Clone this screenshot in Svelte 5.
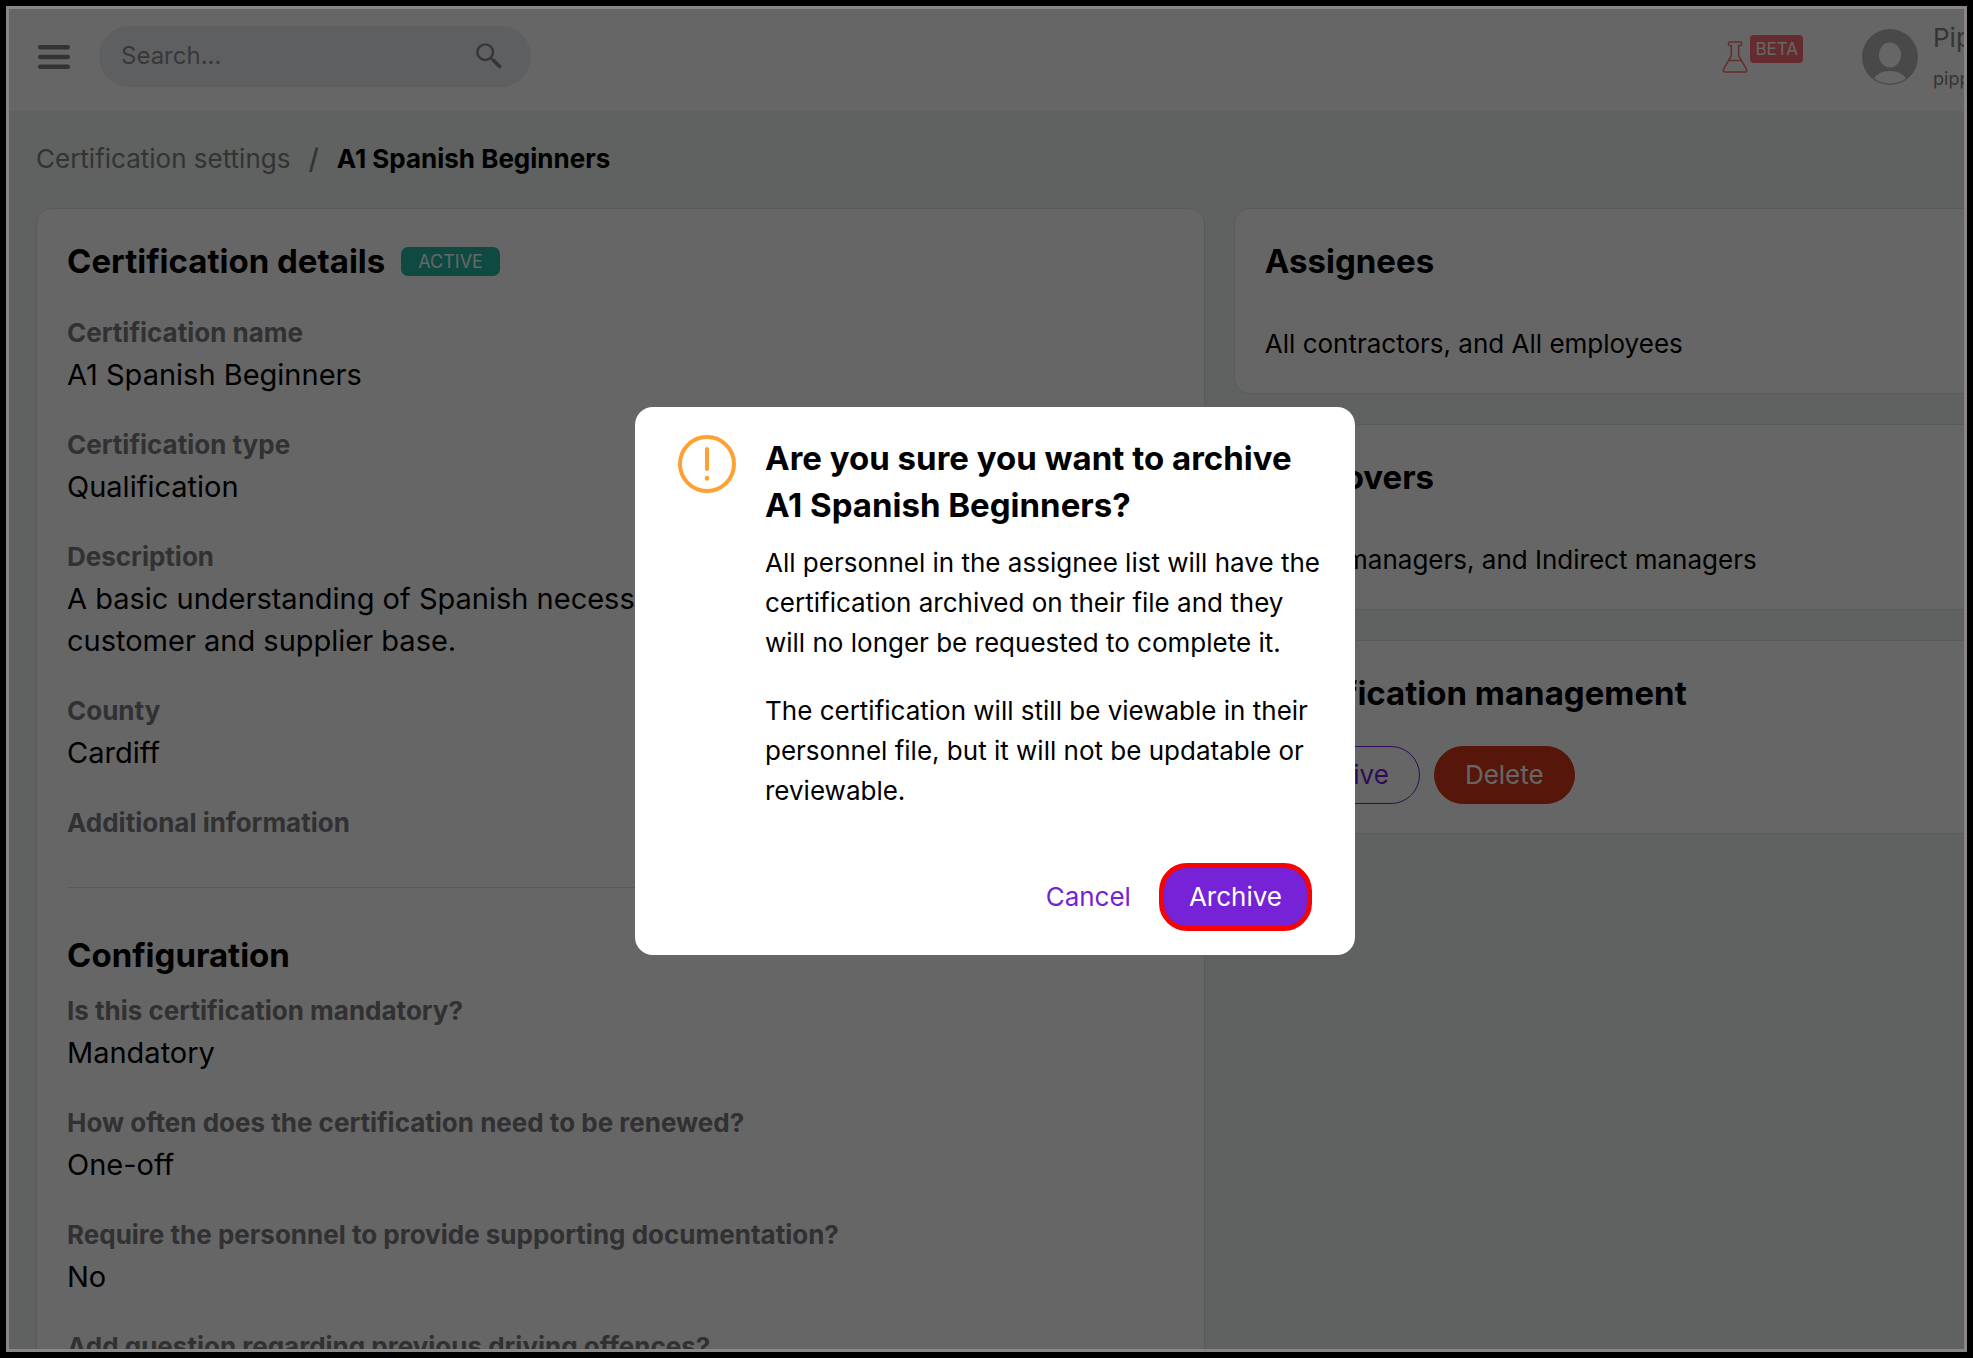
<script lang="ts">
  interface Field {
    label: string;
    value?: string;
  }

  const details: Field[] = [
    { label: "Certification name", value: "A1 Spanish Beginners" },
    { label: "Certification type", value: "Qualification" },
    {
      label: "Description",
      value: "A basic understanding of Spanish necessary for our\ncustomer and supplier base.",
    },
    { label: "County", value: "Cardiff" },
    { label: "Additional information" },
  ];

  const configuration: Field[] = [
    { label: "Is this certification mandatory?", value: "Mandatory" },
    { label: "How often does the certification need to be renewed?", value: "One-off" },
    { label: "Require the personnel to provide supporting documentation?", value: "No" },
    { label: "Add question regarding previous driving offences?", value: "No" },
  ];

  let search = $state("");
  let dialogOpen = $state(true);

  function closeDialog() {
    dialogOpen = false;
  }
</script>

{#snippet fieldList(fields: Field[])}
  <dl class="fields">
    {#each fields as field}
      <div class="field">
        <dt>{field.label}</dt>
        {#if field.value}
          <dd>{field.value}</dd>
        {/if}
      </div>
    {/each}
  </dl>
{/snippet}

<div class="frame">
  <header class="topbar">
    <button class="menu" aria-label="Menu">
      <svg width="32" height="24" viewBox="0 0 32 24" fill="none" stroke="currentColor" stroke-width="4.4" stroke-linecap="round">
        <path d="M2.2 2.2h27.6M2.2 12h27.6M2.2 21.8h27.6" />
      </svg>
    </button>
    <label class="search">
      <input type="text" placeholder="Search..." aria-label="Search" bind:value={search} />
      <svg width="26" height="26" viewBox="0 0 26 26" fill="none" stroke="currentColor" stroke-linecap="round">
        <circle cx="9.2" cy="9.2" r="7.8" stroke-width="2.4" />
        <path d="M15 15.2l1.6 1.6" stroke-width="2.4" />
        <path d="M17.6 17.6l6 6" stroke-width="3.6" />
      </svg>
    </label>
    <div class="beta">
      <svg width="26" height="32" viewBox="0 0 26 32" fill="none" stroke="currentColor" stroke-width="1.5" stroke-linejoin="round">
        <path d="M7.5 1h11q1 0 1 1v1.6q0 1-1 1h-1.8v10l7.7 13.6c.9 1.6.2 2.8-1.4 2.8H3c-1.6 0-2.3-1.2-1.4-2.8L9.3 14.6v-10H7.500q-1 0-1-1V2q0-1 1-1zM7 19.500h12" />
      </svg>
      <span>BETA</span>
    </div>
    <div class="user">
      <svg width="56" height="56" viewBox="0 0 56 56">
        <circle cx="28" cy="28" r="28" fill="#b6b7ba" />
        <ellipse cx="28" cy="26" rx="11" ry="12.5" fill="#fff" />
        <path d="M12 49.3Q17 42 28 42t16 7.3A26.6 26.6 0 0 1 12 49.3z" fill="#fff" />
      </svg>
      <div class="who">
        <span class="name">Pippa</span>
        <span class="mail">pippa</span>
      </div>
    </div>
  </header>

  <nav class="crumbs" aria-label="Breadcrumb">
    <a href="#settings">Certification settings</a>
    <span class="slash">/</span>
    <strong>A1 Spanish Beginners</strong>
  </nav>

  <main class="columns">
    <section class="card">
      <div class="heading">
        <h2>Certification details</h2>
        <span class="badge">ACTIVE</span>
      </div>
      {@render fieldList(details)}
      <hr />
      <h2 class="config-title">Configuration</h2>
      {@render fieldList(configuration)}
    </section>

    <div class="side">
      <section class="card">
        <h2>Assignees</h2>
        <p>All contractors, and All employees</p>
      </section>
      <section class="card">
        <h2>Approvers</h2>
        <p>Direct managers, and Indirect managers</p>
      </section>
      <section class="card">
        <h2>Certification management</h2>
        <div class="actions">
          <button class="btn outline" onclick={() => (dialogOpen = true)}>Archive</button>
          <button class="btn danger">Delete</button>
        </div>
      </section>
    </div>
  </main>

  {#if dialogOpen}
    <div class="overlay">
      <div class="dialog" role="alertdialog" aria-modal="true" aria-labelledby="dialog-title">
        <svg class="alert" width="58" height="58" viewBox="0 0 58 58" fill="none" stroke="#ffa033" stroke-linecap="round">
          <circle cx="29" cy="29" r="27" stroke-width="4" />
          <path d="M29 14v20" stroke-width="4" />
          <path d="M29 43v.6" stroke-width="4.4" />
        </svg>
        <div class="dialog-body">
          <h2 id="dialog-title">Are you sure you want to archive<br />A1 Spanish Beginners?</h2>
          <p>
            All personnel in the assignee list will have the<br />certification archived on their file and they<br />will
            no longer be requested to complete it.
          </p>
          <p>
            The certification will still be viewable in their<br />personnel file, but it will not be updatable or<br
            />reviewable.
          </p>
        </div>
        <div class="dialog-actions">
          <button class="cancel" onclick={closeDialog}>Cancel</button>
          <button class="confirm" onclick={closeDialog}>Archive</button>
        </div>
      </div>
    </div>
  {/if}
</div>

<style>
  :global(body) {
    background: #000;
  }

  .frame {
    position: relative;
    box-sizing: border-box;
    height: calc(100vh - 12px);
    margin: 6px;
    border: 3px solid #8a8686;
    overflow: hidden;
    background: #edf4f1;
    color: #000;
    font-family: Inter, "Liberation Sans", sans-serif;
    font-size: 26px;
    line-height: 40px;
  }

  h2,
  p,
  dl,
  dd {
    margin: 0;
  }

  h2 {
    font-size: 33px;
    line-height: 46px;
    font-weight: 700;
  }

  button {
    padding: 0;
    border: 0;
    background: none;
    font: inherit;
    cursor: pointer;
  }

  svg {
    display: block;
    flex: none;
  }

  .topbar {
    display: flex;
    align-items: center;
    box-sizing: border-box;
    height: 102px;
    padding: 0 0 7px 29px;
    background: #fff;
  }

  .menu {
    margin-right: 29px;
    color: #7d7f85;
  }

  .search {
    display: flex;
    align-items: center;
    box-sizing: border-box;
    width: 432px;
    height: 61px;
    padding: 0 29px 2px 22px;
    border-radius: 31px;
    background: #ecedf1;
    color: #858585;
    font-size: 24px;
  }

  .search input {
    flex: 1;
    min-width: 0;
    padding: 0;
    border: 0;
    outline: 0;
    background: none;
    font: inherit;
    color: inherit;
  }

  .search input::placeholder {
    color: #8d8d8d;
    opacity: 1;
  }

  .beta {
    display: flex;
    gap: 2px;
    align-items: flex-start;
    height: 44px;
    margin-left: auto;
    color: #ff6d74;
  }

  .beta svg {
    margin-top: 6px;
  }

  .beta span {
    padding: 0 5px;
    border-radius: 4px;
    background: #ff6d74;
    color: #fff;
    font-size: 17px;
    line-height: 28px;
  }

  .user {
    display: flex;
    gap: 15px;
    align-items: center;
    width: 102px;
    margin-left: 59px;
    color: #858585;
  }

  .who {
    display: flex;
    flex-direction: column;
    padding-top: 2px;
  }

  .name {
    line-height: 42px;
  }

  .mail {
    font-size: 18px;
  }

  .crumbs {
    display: flex;
    gap: 18px;
    padding: 28px 27px 29px;
  }

  .crumbs a {
    color: #7d7f80;
    text-decoration: none;
  }

  .slash {
    color: #7d7f80;
    font-size: 28px;
    font-weight: 500;
  }

  /* runs past the right edge of the window */
  .columns {
    display: grid;
    grid-template-columns: minmax(0, 3fr) minmax(0, 2fr);
    align-items: start;
    gap: 29px;
    margin: 0 -49px 0 27px;
  }

  .card {
    box-sizing: border-box;
    padding: 29px 30px;
    border: 1px solid #dfe1e1;
    border-radius: 16px;
    background: #fff;
  }

  .side {
    display: flex;
    flex-direction: column;
    gap: 30px;
  }

  .side p {
    margin-top: 40px;
  }

  .heading {
    display: flex;
    align-items: center;
    gap: 16px;
    margin-bottom: 28px;
  }

  .badge {
    padding: 0 17px;
    border-radius: 7px;
    background: #25b9a5;
    color: #fff;
    font-size: 18px;
    line-height: 29px;
  }

  .fields {
    display: flex;
    flex-direction: column;
    gap: 28px;
  }

  dt {
    color: #7b7c80;
    font-weight: 700;
    line-height: 42px;
  }

  dd {
    font-size: 29px;
    line-height: 42px;
    white-space: pre-line;
  }

  hr {
    height: 1px;
    margin: 43px 0 44px;
    border: 0;
    background: #dfe1e1;
  }

  .config-title {
    margin-bottom: 12px;
  }

  .actions {
    display: flex;
    gap: 14px;
    margin-top: 30px;
  }

  .btn {
    box-sizing: border-box;
    height: 58px;
    padding: 0 30px;
    border: 1px solid;
    border-radius: 29px;
  }

  .outline {
    border-color: #7622d7;
    color: #7622d7;
  }

  .danger {
    border-color: #d73919;
    background: #d73919;
    color: #fff;
  }

  .overlay {
    position: absolute;
    inset: 0;
    display: flex;
    align-items: center;
    justify-content: center;
    padding: 4px 0 0 17px;
    background: rgba(0, 0, 0, 0.6);
  }

  .dialog {
    display: grid;
    grid-template-columns: 58px minmax(0, 1fr);
    column-gap: 29px;
    box-sizing: border-box;
    width: 720px;
    padding: 28px 43px 24px;
    border-radius: 18px;
    background: #fff;
  }

  .dialog-body h2 {
    margin-bottom: 14px;
    line-height: 47px;
    white-space: nowrap;
  }

  .dialog-body p {
    margin-bottom: 28px;
    white-space: nowrap;
  }

  .dialog-actions {
    display: flex;
    grid-column: 1 / -1;
    align-items: center;
    justify-content: flex-end;
    gap: 28px;
    margin-top: 24px;
  }

  .cancel {
    color: #7622d7;
  }

  .confirm {
    height: 68px;
    padding: 0 25px;
    border: 5px solid #f60404;
    border-radius: 28px;
    background: #7622d7;
    color: #fff;
  }
</style>
